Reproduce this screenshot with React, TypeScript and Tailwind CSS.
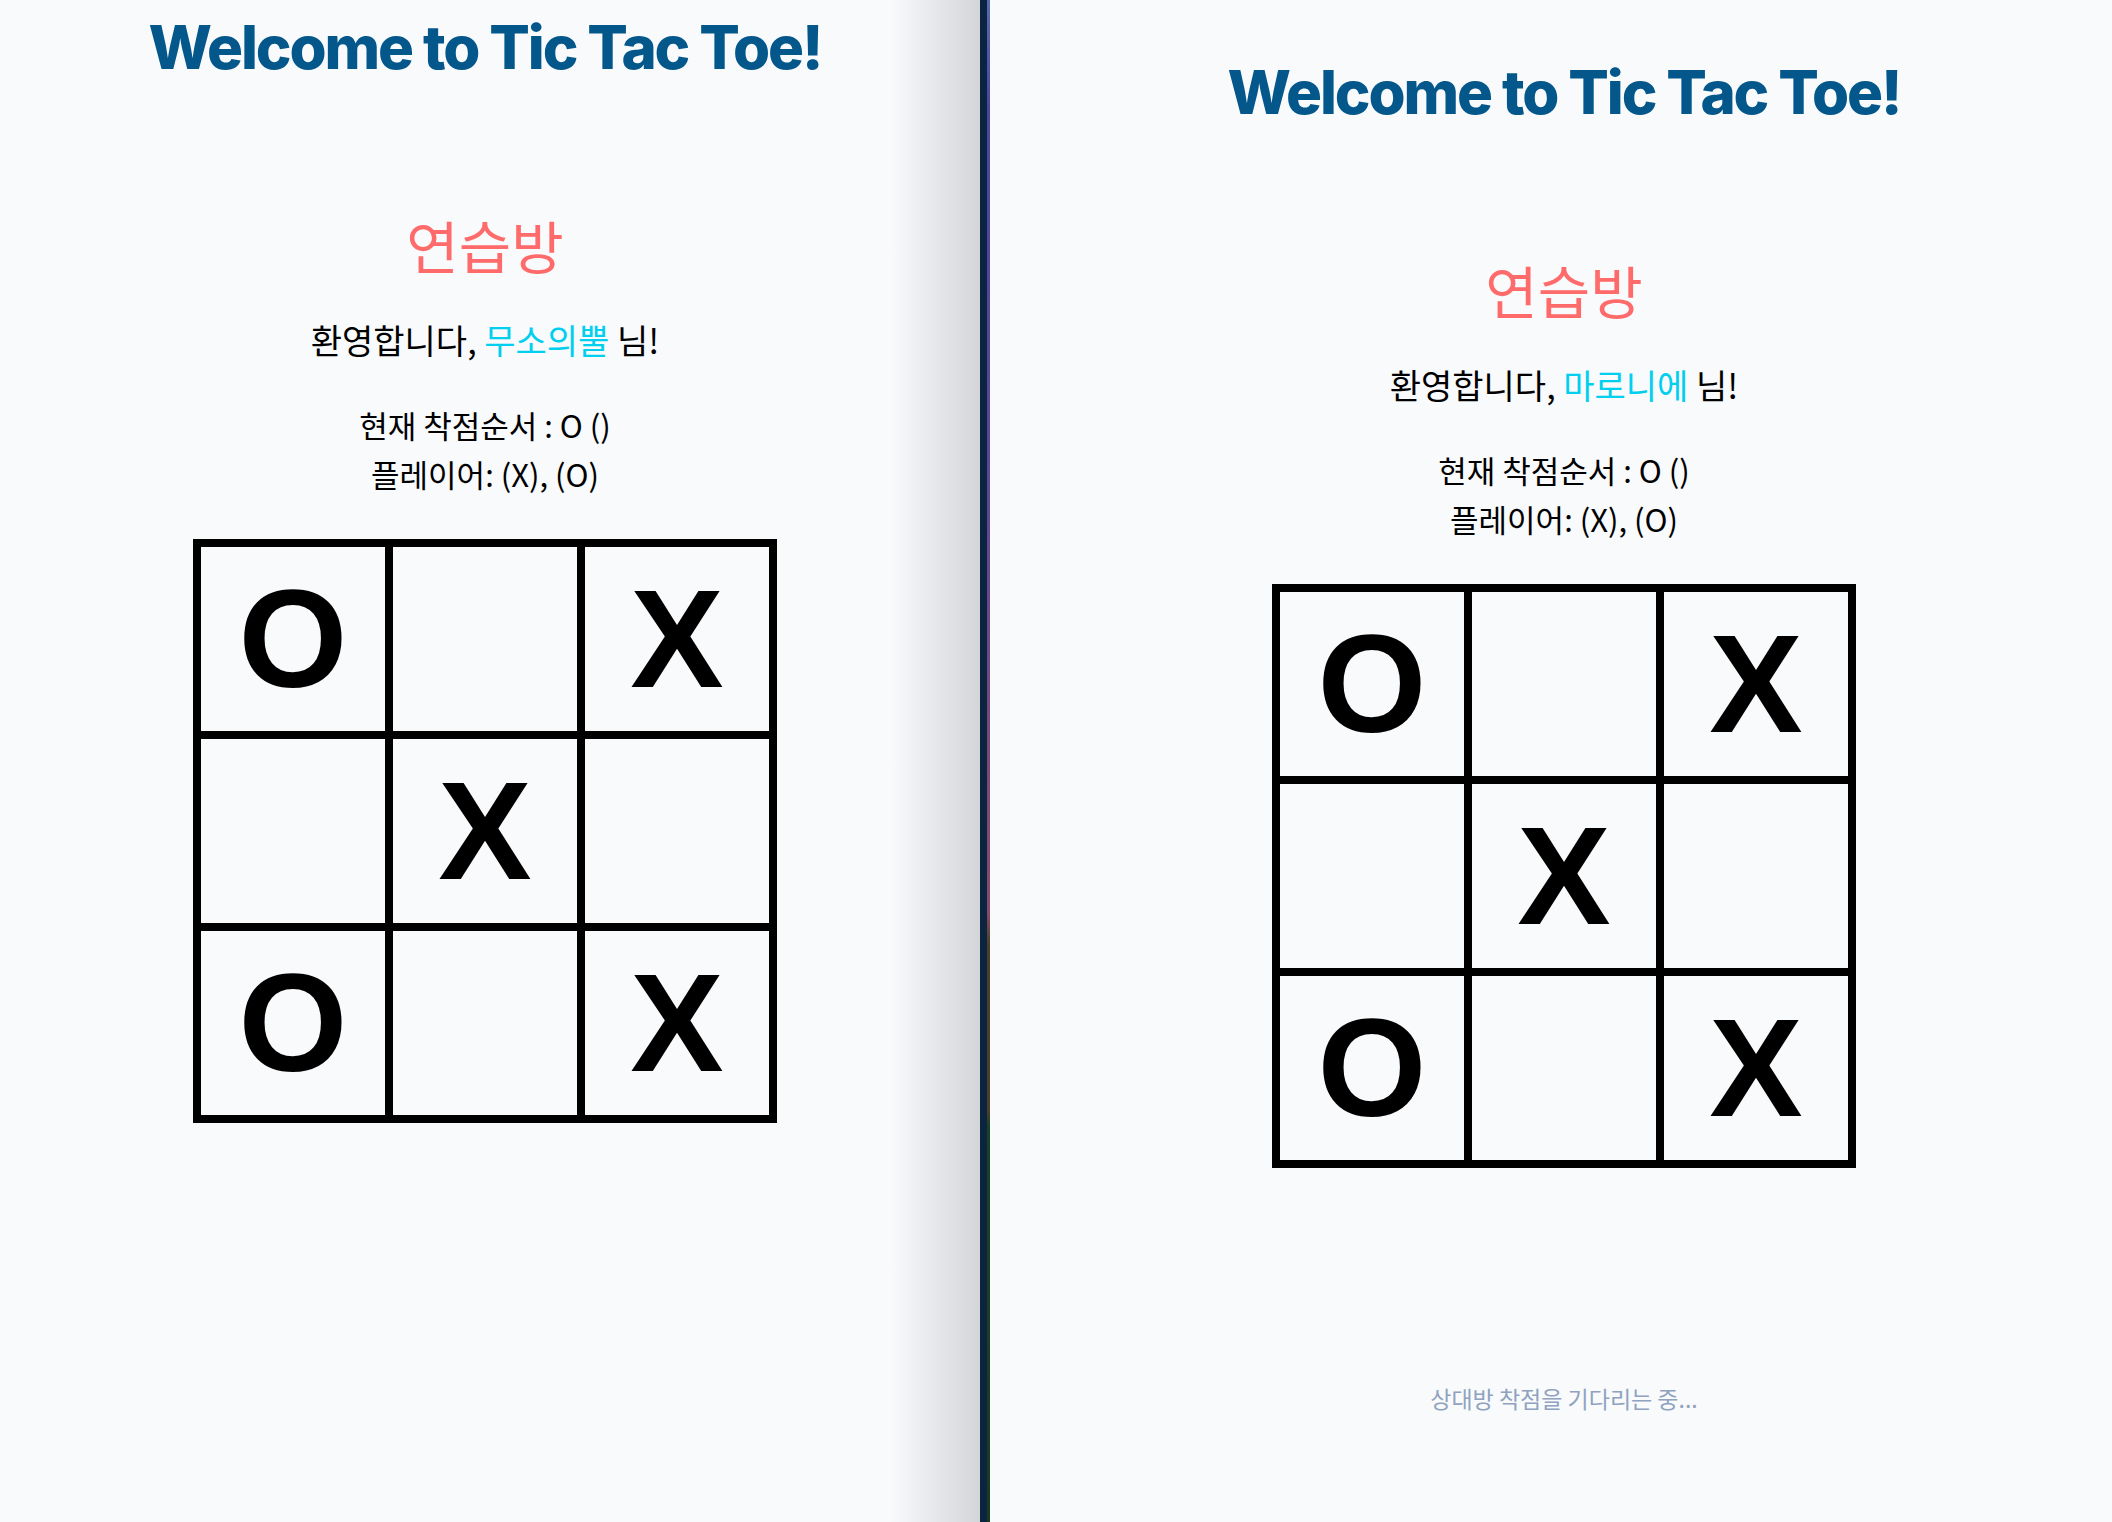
import React from "react";

type Cell = "X" | "O" | "";

const board: Cell[] = ["O", "", "X", "", "X", "", "O", "", "X"];

const kr = "font-['Noto_Sans_CJK_KR','Noto_Sans',sans-serif]";

const Board: React.FC = () => (
  <div className="mt-[50px] grid grid-cols-3 border-4 border-black">
    {board.map((c, i) => (
      <div
        key={i}
        className="flex h-[192px] w-[192px] items-center justify-center border-4 border-black font-['Liberation_Sans',Arial,sans-serif] text-[140px] font-bold leading-none text-black"
      >
        {c}
      </div>
    ))}
  </div>
);

const Game: React.FC<{ name: string; waiting?: boolean; top: string }> = ({ name, waiting, top }) => (
  <div className={`flex flex-col items-center ${top}`}>
    <h1 className="font-['Inter',sans-serif] text-[60px] font-extrabold leading-none tracking-[-0.035em] text-[#04578b]">
      Welcome to Tic Tac Toe!
    </h1>
    <h2 className={`${kr} mt-[139px] text-[57px] leading-none text-[#ff6b6b]`}>연습방</h2>
    <p className={`${kr} mt-[50px] text-[34px] leading-none text-black`}>
      환영합니다, <span className="text-[#00cfef]">{name}</span> 님!
    </p>
    <p className={`${kr} mt-[52px] text-[31px] leading-none text-black`}>현재 착점순서 : O ()</p>
    <p className={`${kr} mt-[18px] text-[31px] leading-none text-black`}>플레이어: (X), (O)</p>
    <Board />
    {waiting && (
      <p className={`${kr} mt-[219px] text-[23px] leading-none text-[#8fa2bf]`}>상대방 착점을 기다리는 중...</p>
    )}
  </div>
);

export default function App() {
  return (
    <div className="flex h-[1522px] w-[2112px] overflow-hidden bg-[#f8fafc]">
      {/* 왼쪽 창 */}
      <div className="w-[980px] shrink-0 bg-[linear-gradient(to_right,#f8fafc_calc(100%-90px),#d3d5d9)]">
        <div className="w-[970px]">
          <Game name="무소의뿔" top="pt-[17px]" />
        </div>
      </div>
      <div className="w-[7px] shrink-0 bg-[#0b2540]" />
      <div className="w-[3px] shrink-0 bg-[linear-gradient(to_bottom,#5a6ab0_0%,#4a46a0_7%,#5a4698_30%,#8a4a6a_60%,#4a4028_62%,#4a4028_73%,#1a4028_74%,#1a3a20_100%)]" />
      {/* 오른쪽 창 */}
      <div className="flex-1 overflow-hidden">
        <div className="w-[1148px]">
          <Game name="마로니에" waiting top="pt-[62px]" />
        </div>
      </div>
    </div>
  );
}
